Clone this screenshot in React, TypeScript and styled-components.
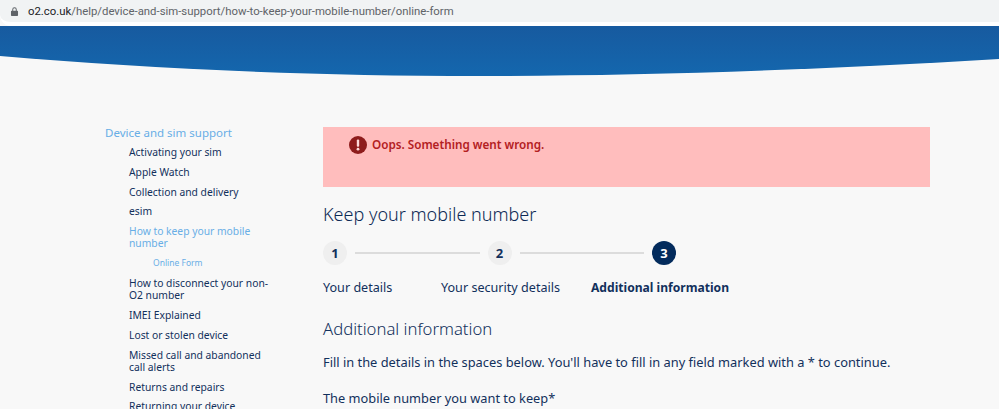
import React from 'react';
import styled, {createGlobalStyle} from 'styled-components';

const GlobalStyle = createGlobalStyle`
    html, body {
        margin: 0;
        padding: 0;
        height: 409px;
        overflow: hidden;
        background: #f8f8f8;
        font-family: "Noto Sans", "Open Sans", sans-serif;
        color: #0d2a55;
    }
`;

type NavEntry = {label: string; level?: 'active' | 'sub'};

const navEntries: NavEntry[] = [
    {label: 'Activating your sim'},
    {label: 'Apple Watch'},
    {label: 'Collection and delivery'},
    {label: 'esim'},
    {label: 'How to keep your mobile number', level: 'active'},
    {label: 'Online Form', level: 'sub'},
    {label: 'How to disconnect your non-O2 number'},
    {label: 'IMEI Explained'},
    {label: 'Lost or stolen device'},
    {label: 'Missed call and abandoned call alerts'},
    {label: 'Returns and repairs'},
    {label: 'Returning your device'},
];

const steps = [
    {number: 1, label: 'Your details'},
    {number: 2, label: 'Your security details'},
    {number: 3, label: 'Additional information', current: true},
];

const App = () => (
    <Page>
        <GlobalStyle/>
        <AddressBar>
            <svg width='9' height='11' viewBox='0 0 12 14'>
                <path
                    fill='#5f6368'
                    d='M3 6V4.200a3 3 0 0 1 6 0V6h.7c.6 0 1 .4 1 1v5c0 .6-.4 1-1 1H2.300c-.6 0-1-.4-1-1V7c0-.6.4-1 1-1H3zm1.300 0h3.400V4.200a1.700 1.700 0 0 0-3.400 0V6z'
                />
            </svg>
            <Url>
                <strong>{'o2.co.uk'}</strong>
                {'/help/device-and-sim-support/how-to-keep-your-mobile-number/online-form'}
            </Url>
        </AddressBar>
        <Hero viewBox='0 0 999 50' preserveAspectRatio='none'>
            <defs>
                <linearGradient id='heroFill' x1='0' y1='0' x2='0' y2='1'>
                    <stop offset='0' stopColor='#175a9f'/>
                    <stop offset='1' stopColor='#1467ae'/>
                </linearGradient>
            </defs>
            <path
                fill='url(#heroFill)'
                d='M0 0H999V33C820 44 640 50 480 50C300 50 140 42 0 30Z'
            />
        </Hero>
        <Content>
            <Sidebar>
                <SidebarTitle>{'Device and sim support'}</SidebarTitle>
                <NavList>
                    {navEntries.map((entry) => (
                        <NavItem
                            key={entry.label}
                            $level={entry.level}
                        >
                            {entry.label}
                        </NavItem>
                    ))}
                </NavList>
            </Sidebar>
            <Main>
                <Alert>
                    <svg width='18' height='18' viewBox='0 0 18 18'>
                        <circle cx='9' cy='9' r='9' fill='#8e1c1c'/>
                        <rect x='7.800' y='3.600' width='2.400' height='7.200' rx='1' fill='#ffd9d9'/>
                        <circle cx='9' cy='13.200' r='1.400' fill='#ffd9d9'/>
                    </svg>
                    <AlertText>{'Oops. Something went wrong.'}</AlertText>
                </Alert>
                <PageTitle>{'Keep your mobile number'}</PageTitle>
                <Stepper>
                    <StepTrack>
                        {steps.map((step, index) => (
                            <React.Fragment key={step.number}>
                                {index > 0 && <StepLine/>}
                                <StepCircle $current={step.current}>{step.number}</StepCircle>
                            </React.Fragment>
                        ))}
                    </StepTrack>
                    <StepLabels>
                        {steps.map((step) => (
                            <StepLabel
                                key={step.number}
                                $current={step.current}
                            >
                                {step.label}
                            </StepLabel>
                        ))}
                    </StepLabels>
                </Stepper>
                <SectionTitle>{'Additional information'}</SectionTitle>
                <Intro>{"Fill in the details in the spaces below. You'll have to fill in any field marked with a * to continue."}</Intro>
                <FieldLabel>{'The mobile number you want to keep*'}</FieldLabel>
            </Main>
        </Content>
    </Page>
);

export default App;

const Page = styled.div`
    width: 999px;
    height: 409px;
    overflow: hidden;
    background: #f8f8f8;
`;

const AddressBar = styled.div`
    height: 22px;
    display: flex;
    align-items: center;
    gap: 9px;
    padding-left: 10px;
    background: #f1f3f4;
    border-bottom-left-radius: 11px;
    border-bottom: 4px solid #fff;
`;

const Url = styled.div`
    font-family: "Roboto", sans-serif;
    font-size: 11.350px;
    color: #5f6368;

    strong {
        font-weight: 400;
        color: #202124;
    }
`;

const Hero = styled.svg`
    display: block;
    width: 999px;
    height: 50px;
`;

const Content = styled.div`
    display: flex;
    padding: 51px 0 0 105px;
`;

const Sidebar = styled.nav`
    width: 218px;
    flex: none;
`;

const SidebarTitle = styled.div`
    font-size: 11.500px;
    line-height: 12px;
    color: #68aee6;
`;

const NavList = styled.div`
    display: flex;
    flex-direction: column;
    gap: 7.600px;
    margin-top: 7px;
    padding-left: 24px;
    width: 145px;
`;

const NavItem = styled.div<{$level?: 'active' | 'sub'}>`
    font-size: ${({$level}) => ($level === 'sub' ? '8.500px' : '10.300px')};
    line-height: 12.200px;
    color: ${({$level}) => ($level ? '#68aee6' : '#12305c')};
    padding-left: ${({$level}) => ($level === 'sub' ? '24px' : '0')};
`;

const Main = styled.main`
    width: 607px;
    flex: none;
`;

const Alert = styled.div`
    height: 60px;
    box-sizing: border-box;
    padding: 9px 0 0 26px;
    display: flex;
    align-items: flex-start;
    gap: 5px;
    background: #ffbdbd;
`;

const AlertText = styled.div`
    font-size: 11.700px;
    line-height: 17px;
    font-weight: 600;
    color: #b3201f;
`;

const PageTitle = styled.h1`
    margin: 15px 0 0;
    font-size: 18px;
    line-height: 25px;
    font-weight: 300;
    color: #0d2a55;
`;

const Stepper = styled.div`
    margin-top: 14px;
`;

const StepTrack = styled.div`
    display: flex;
    align-items: center;
    width: 353px;
    gap: 8px;
`;

const StepLine = styled.div`
    flex: 1;
    height: 2px;
    background: #dcdcdc;
`;

const StepCircle = styled.div<{$current?: boolean}>`
    width: 24px;
    height: 24px;
    border-radius: 50%;
    flex: none;
    display: flex;
    align-items: center;
    justify-content: center;
    font-size: 13px;
    font-weight: 700;
    color: ${({$current}) => ($current ? '#fff' : '#12305c')};
    background: ${({$current}) => ($current ? '#032b5c' : '#efefef')};
`;

const StepLabels = styled.div`
    display: grid;
    grid-template-columns: 118px 150px auto;
    margin-top: 14px;
`;

const StepLabel = styled.div<{$current?: boolean}>`
    font-size: ${({$current}) => ($current ? '12.100px' : '12.600px')};
    line-height: 17px;
    font-weight: ${({$current}) => ($current ? 700 : 400)};
    color: #12305c;
`;

const SectionTitle = styled.h2`
    margin: 21px 0 0;
    font-size: 16.700px;
    line-height: 23px;
    font-weight: 300;
    color: #12305c;
`;

const Intro = styled.p`
    margin: 14px 0 0;
    font-size: 12.850px;
    line-height: 17px;
    color: #12305c;
`;

const FieldLabel = styled.p`
    margin: 19px 0 0;
    font-size: 12.800px;
    line-height: 17px;
    color: #12305c;
`;
